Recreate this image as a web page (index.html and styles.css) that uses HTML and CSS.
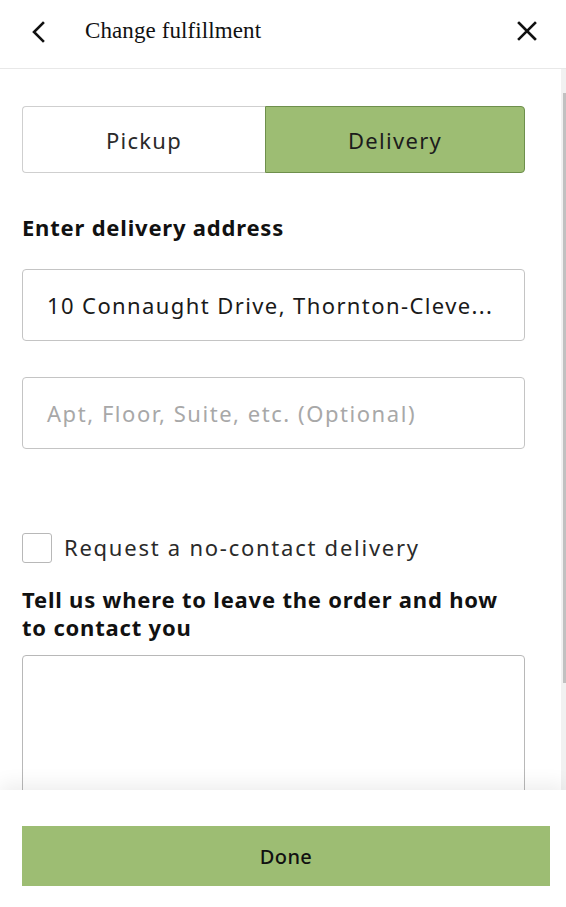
FILE: index.html
```html
<!DOCTYPE html>
<html lang="en">
<head>
<meta charset="utf-8">
<title>Change fulfillment</title>
<link rel="stylesheet" href="styles.css">
</head>
<body>
<div class="app">
  <header class="topbar">
    <button class="icon-btn back" aria-label="Back">
      <svg width="16" height="22" viewBox="0 0 16 22"><path d="M12 2 L3 11 L12 20" fill="none" stroke="#111" stroke-width="2.6" stroke-linecap="square"/></svg>
    </button>
    <h1 class="title">Change fulfillment</h1>
    <button class="icon-btn close" aria-label="Close">
      <svg width="20" height="20" viewBox="0 0 20 20"><path d="M2 2 L18 18 M18 2 L2 18" fill="none" stroke="#111" stroke-width="2.6" stroke-linecap="square"/></svg>
    </button>
  </header>
  <main class="scroll">
    <div class="content">
      <div class="segment">
        <button class="seg-btn">Pickup</button>
        <button class="seg-btn active">Delivery</button>
      </div>
      <h2 class="label">Enter delivery address</h2>
      <div class="field address">10 Connaught Drive, Thornton-Cleve...</div>
      <div class="field placeholder">Apt, Floor, Suite, etc. (Optional)</div>
      <label class="check-row">
        <span class="checkbox"></span>
        <span class="check-text">Request a no-contact delivery</span>
      </label>
      <h2 class="label two-line">Tell us where to leave the order and how to contact you</h2>
      <div class="textarea"></div>
    </div>
    <div class="scrollbar"><div class="thumb"></div></div>
  </main>
  <footer class="footer">
    <button class="done">Done</button>
  </footer>
</div>
</body>
</html>
```
FILE: styles.css
```css
* { box-sizing: border-box; }
html, body { margin: 0; padding: 0; background: #fff; }
body { font-family: "Noto Sans", "Open Sans", sans-serif; color: #111; }
.app { width: 566px; height: 907px; display: flex; flex-direction: column; overflow: hidden; }
.topbar { height: 69px; flex: 0 0 69px; display: flex; align-items: center; border-bottom: 1px solid #e8e8e8; padding: 0 28px 0 30px; }
.icon-btn { background: none; border: 0; padding: 0; display: flex; align-items: center; justify-content: center; cursor: pointer; }
.back { width: 18px; height: 24px; margin-top: -4px; }
.close { width: 22px; height: 22px; margin-left: auto; margin-top: -6px; }
.title { margin: -6px 0 0 37px; font-family: "Liberation Serif", "Times New Roman", serif; font-weight: 400; font-size: 23px; color: #111; letter-spacing: 0.1px; }
.scroll { flex: 1 1 auto; overflow: hidden; position: relative; }
.scrollbar { position: absolute; top: 0; right: 0; bottom: 0; width: 5px; background: #f1f1f1; }
.thumb { position: absolute; top: 24px; right: 0; width: 3px; height: 590px; background: #c1c1c1; }
.content { padding: 37px 41px 120px 22px; }
.segment { display: flex; height: 67px; }
.seg-btn { flex: 0 0 243px; font-family: inherit; font-size: 22px; color: #2a2a2a; background: #fff; border: 1px solid #cfcfcf; border-radius: 4px 0 0 4px; border-right: 0; cursor: pointer; letter-spacing: 1.3px; }
.seg-btn.active { flex: 1 1 auto; background: #9dbd73; border: 1px solid #6e8f4c; border-radius: 0 4px 4px 0; color: #1c1c1c; }
.label { margin: 40px 0 0; font-size: 22px; font-weight: 700; line-height: 28px; color: #111; letter-spacing: 0.8px; }
.field { height: 72px; border: 1px solid #c4c4c4; border-radius: 4px; padding: 0 24px; display: flex; align-items: center; font-size: 22px; color: #1a1a1a; letter-spacing: 1.4px; white-space: nowrap; overflow: hidden; }
.label + .field { margin-top: 28px; }
.field + .field { margin-top: 36px; }
.field.placeholder { color: #a8a8a8; letter-spacing: 1.55px; }
.check-row { display: flex; align-items: center; height: 30px; margin-top: 84px; cursor: pointer; }
.checkbox { width: 30px; height: 30px; border: 1px solid #b8b8b8; border-radius: 3px; flex: 0 0 30px; }
.check-text { margin: 0 0 3px 12px; font-size: 22px; line-height: 26px; color: #2a2a2a; letter-spacing: 1.75px; }
.label.two-line { margin-top: 22px; }
.textarea { margin-top: 14px; height: 170px; border: 1px solid #b8b8b8; border-radius: 4px; }
.footer { flex: 0 0 117px; position: relative; z-index: 2; background: #fff; box-shadow: 0 -6px 18px rgba(0,0,0,0.07); padding: 36px 16px 21px 22px; }
.done { width: 100%; height: 60px; border: 0; background: #9dbd73; font-family: inherit; font-size: 20px; font-weight: 500; color: #111; cursor: pointer; letter-spacing: 0.4px; }
```
